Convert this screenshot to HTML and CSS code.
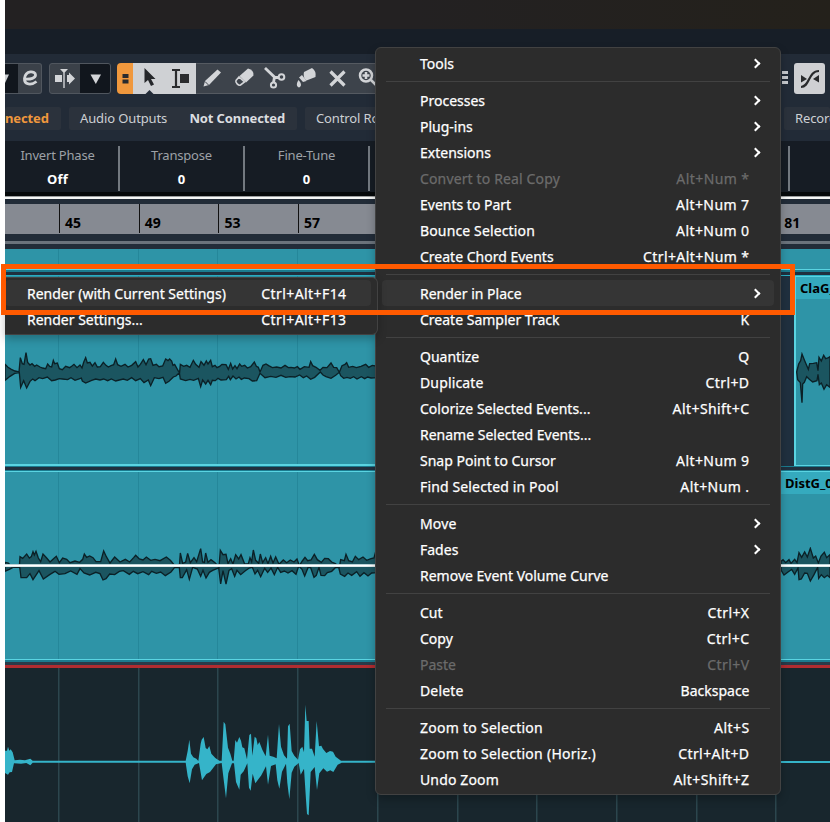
FILE: index.html
```html
<!DOCTYPE html>
<html lang="en">
<head>
<meta charset="utf-8">
<title>Project window</title>
<link rel="stylesheet" href="styles.css">
</head>
<body>
<div class="app">
  <div class="titlebar"></div>
  <div class="menubar"></div>

  <div class="toolbar">
    <div class="group group-edit">
      <span class="dark-cell"><svg width="13" height="29" viewBox="0 0 13 29"><path d="M-5 10.500H4L-.5 20z" fill="#cdd0d3"/></svg></span>
      <span class="cell"><svg width="23" height="29" viewBox="0 0 23 29"><path d="M6.500 15C13 15.500 17.500 14 17.500 11C17.500 6.500 7.500 6 6.500 14.500C6 21 13.500 21.500 18.500 17.500" fill="none" stroke="#d3d5d8" stroke-width="2.800"/></svg></span>
    </div>
    <div class="group group-scroll">
      <span class="cell"><svg width="30" height="29" viewBox="0 0 30 29"><path d="M5 11h7v7H5zM17 11h2V8.500l6 6-6 6V18h-2zM10 5h8l-3.300 3.500V24h-1.400V8.500z" fill="#d3d5d8"/></svg></span>
      <span class="dark-cell"><svg width="30" height="29" viewBox="0 0 30 29"><path d="M10.500 10.500h10.500l-5.200 9.500z" fill="#d3d5d8"/></svg></span>
    </div>
    <div class="tools">
      <span class="tool-orange"><svg width="16" height="31" viewBox="0 0 16 31"><path d="M5.500 11h6v4h-6zM5.500 16.500h6v4h-6z" fill="#282a2e"/></svg></span>
      <span class="tool-light"><svg width="63" height="31" viewBox="0 0 63 31">
        <path d="M11.500 5v15l3.500-3 3 6 3-1.500-3-5.500h4.500z" fill="#25272a"/><path d="M12.500 31l4-4 4 4z" fill="#222b37"/>
        <path d="M39 7h8M43 7v17M39 24h8" stroke="#2b2c2e" stroke-width="2.200"/><path d="M47 11h9v9h-9z" fill="#2b2c2e"/></svg></span>
      <span class="tool-dark"><svg width="184" height="29" viewBox="0 0 184 29">
        <g fill="#d3d5d8">
          <path d="M7.500 22.500l1.500-5.500L21.500 5.500l3.500 3-12 12.500z"/><path d="M9 17.500l3.500 3.500" stroke="#3d434b"/>
          <path d="M43.500 12l8.500-7.500q6 1.500 5.500 7L50 18.500z"/><path d="M43 13l-3 3.500c-1 2 2.500 5.500 4.500 4.500l4-3z" fill="none" stroke="#d3d5d8" stroke-width="1.600"/>
          <path d="M108 8l8-4q4.500 3 3.500 9l-9 3.500q-4-3.500-2.500-8.500zM106 11l4.500 6-3.500 1-4-4.500zM102.500 16c3 3 3.500 6.500.5 7.500-3-1-2.500-4.500-.5-7.500z"/>
        </g>
        <g fill="none" stroke="#d3d5d8" stroke-width="2.500"><path d="M69 4l10 9.500h4M78.500 13l-1 5.500" stroke-width="2.800"/><circle cx="85.500" cy="13" r="2.800" stroke-width="2"/><circle cx="77.500" cy="21" r="2.600" stroke-width="2"/>
          <path d="M134.500 7.500l14 14M148.500 7.500l-14 14" stroke-width="3.200"/>
          <circle cx="170" cy="11.500" r="6"/><path d="M166.500 11.500h7M170 8v7M175 16l8 8"/></g>
      </svg></span>
    </div>
    <div class="toolbar-right">
      <svg width="8" height="31" viewBox="0 0 8 31"><path d="M0 8h6v3H0zM0 13h6v3H0zM0 18h6v3H0z" fill="#c6c9cd"/></svg>
      <span class="snap"><svg width="31" height="31" viewBox="0 0 31 31"><path d="M7 24C16 24 14 8 25 8" fill="none" stroke="#292a2c" stroke-width="2.200"/><path d="M7 12l6 4-6 3.500zM25 12l-6 4 6 3.500z" fill="#292a2c"/></svg></span>
    </div>
  </div>

  <div class="status">
    <div class="pill pill-in"><b class="warn">nected</b></div>
    <div class="pill pill-out"><span>Audio Outputs</span><b>Not Connected</b></div>
    <div class="pill pill-control"><span>Control Room</span></div>
    <div class="pill pill-record"><span>Record</span></div>
  </div>

  <div class="info">
    <div class="field"><span>Invert Phase</span><b>Off</b></div>
    <div class="field"><span>Transpose</span><b>0</b></div>
    <div class="field"><span>Fine-Tune</span><b>0</b></div>
    <div class="field field-rest"></div>
  </div>
  <div class="info-edge"></div>

  <div class="ruler">
    <span>45</span><span>49</span><span>53</span><span>57</span><span></span><span></span><span></span><span></span><span></span><span class="last">81</span>
  </div>
  <div class="range"></div>

  <div class="lane lane-top grid"></div>
  <div class="gap gap-a"></div>
  <div class="lane-row">
    <div class="clip clip-left grid">
      <svg class="wave wave-one" width="375" height="80" viewBox="15 0 1125 240"><path d="M15 88L24 97 34 103 45 108 57 111 61 68 67 86 72 88 78 53 83 82 90 90 96 86 104 94 110 90 120 96 128 99 137 101 143 87 149 94 155 96 160 76 164 86 172 84 178 101 187 104 197 94 209 98 215 94 222 88 231 98 240 90 246 99 251 82 257 68 262 84 270 82 277 93 285 83 292 96 301 95 310 82 318 91 325 96 333 92 341 89 347 72 353 89 363 94 375 88 384 96 395 91 407 80 414 96 421 88 430 74 438 89 446 72 452 71 459 91 469 88 477 95 488 93 497 72 504 77 509 72 515 78 519 91 524 88 535 108 539 111 541 88 551 94 560 91 570 97 580 76 587 88 597 97 603 80 609 87 612 91 619 78 624 87 632 76 637 95 645 91 651 98 659 94 666 88 678 89 685 103 692 85 698 102 705 92 711 101 719 87 725 94 734 91 742 99 752 95 763 81 769 94 775 97 780 111 789 91 798 87 806 92 817 98 830 96 843 99 855 91 865 98 873 97 883 99 892 95 900 103 913 95 927 97 932 80 938 92 948 97 960 106 969 97 981 98 993 84 1001 97 1010 98 1018 112 1026 92 1035 88 1040 83 1046 97 1058 94 1069 98 1083 94 1097 88 1106 97 1117 91 1128 93V128L1113 129 1103 126 1094 131 1084 125 1071 132 1061 125 1051 130 1041 127 1031 130 1022 122 1018 112 1007 121 993 130 978 125 969 120 961 111 944 127 932 133 920 123 910 128 899 120 885 126 870 125 857 127 843 121 828 127 812 124 795 128 780 115 770 137 757 138 747 131 733 129 724 133 717 126 708 132 699 123 691 134 686 124 679 134 663 135 654 130 646 137 637 136 632 149 624 136 617 147 608 135 602 155 595 130 581 136 570 133 557 137 541 132 538 113 528 123 520 126 507 139 497 145 489 127 477 131 463 128 452 152 445 135 432 143 421 131 407 137 395 128 382 136 370 132 358 135 347 138 334 132 323 137 311 132 300 135 287 132 275 136 257 144 247 138 244 129 225 136 213 128 203 134 187 132 178 131 166 135 155 137 142 126 128 131 117 128 105 137 98 132 90 139 80 159 71 137 62 157 58 113 44 115 30 124 15 136z"/></svg>
    </div>
    <div class="clip clip-cla"><div class="clip-name">ClaG_</div>
      <svg class="wave wave-cla" width="34" height="52" viewBox="168 290 102 156"><path d="M170 350L176 326 182 316 186 296 194 316 205 342 209 325 220 324 230 322 234 346 237 306 244 317 251 300 257 310 264 308 270 304V396L260 388 252 402 244 383 238 388 234 357 231 376 218 380 208 372 200 364 193 381 188 386 186 442 181 382 173 373z"/></svg>
    </div>
  </div>
  <div class="gap gap-b"></div>
  <div class="lane lane-bottom grid">
    <div class="clip-name name-dist">DistG_0</div>
    <svg class="wave wave-two" width="375" height="60" viewBox="15 0 1125 180"><path d="M15 67L25 69 35 80 58 82 60 50 68 55 80 42 88 54 94 50 99 35 103 45 108 34 115 54 122 65 129 42 140 54 150 66 163 54 169 49 178 68 188 54 200 58 210 68 225 63 239 67 248 58 253 42 260 52 269 48 279 53 288 65 302 65 311 33 319 50 330 69 344 51 360 66 376 58 389 66 401 53 407 46 418 57 429 60 439 51 452 61 465 58 480 62 499 51 511 61 522 74 538 80 541 39 548 70 557 66 563 40 571 68 582 53 590 65 602 26 608 66 613 67 617 39 624 67 633 59 645 68 657 81 661 31 669 44 678 43 684 71 692 56 699 72 707 44 716 57 723 44 734 72 745 71 750 53 755 65 760 30 767 61 776 70 781 42 788 68 797 53 804 71 812 49 819 69 827 51 837 73 850 60 860 68 871 60 882 66 891 57 898 77 907 63 915 52 923 62 933 60 943 43 952 59 964 67 974 55 985 56 995 66 1006 71 1018 81 1022 59 1033 62 1038 43 1046 62 1057 66 1066 49 1076 59 1089 51 1100 61 1113 56 1122 54 1128 31V98L1115 99 1104 108 1092 98 1080 109 1070 95 1055 106 1044 99 1034 109 1021 102 1016 82 1006 83 995 94 982 98 974 107 963 106 957 82 949 106 942 112 932 83 924 83 914 108 906 88 896 78 888 103 876 92 864 99 853 93 842 97 833 82 823 104 813 84 803 97 794 85 782 110 773 91 765 102 757 82 748 84 736 92 722 104 711 91 704 109 695 86 687 91 678 132 669 92 662 132 656 84 638 91 628 97 618 114 609 91 602 109 592 87 578 82 568 118 560 89 547 113 541 113 538 83 524 82 513 96 496 107 482 96 469 100 455 94 446 104 429 95 413 101 400 94 388 103 370 92 358 94 344 104 329 102 318 116 309 120 300 101 287 97 269 105 252 99 240 86 231 103 212 93 195 101 177 103 165 94 150 103 130 117 117 92 99 119 90 101 80 113 63 113 59 81 39 82 28 88 15 94z"/></svg>
    <svg class="wave wave-dist" width="49" height="36" viewBox="123 82 147 108"><path d="M123 125L129 120 137 129 147 120 153 131 164 119 171 129 177 99 185 113 194 97 202 112 211 86 220 115 227 109 235 130 243 109 253 98 260 114 270 105V174L262 167 253 174 244 165 236 176 233 143 222 165 211 184 202 161 194 160 184 178 177 180 174 145 164 164 155 149 145 156 132 166 123 151z"/></svg>
    <div class="volume"></div>
  </div>
  <div class="gap gap-c"></div>
  <div class="red"></div>
  <div class="record-lane grid">
    <svg width="375" height="115" viewBox="15 160 1125 345"><path d="M15 303L21 303 24 291 28 303 32 299 38 308 44 332 60 330 75 332 91 327 98 333H557L563 304 568 270 573 312 580 323 589 327 595 334 602 282 605 270 611 262 617 295 622 299 628 289 634 312 646 325 658 333H665L671 216 676 224 684 294 691 312 697 333H701L706 271 711 279 718 262 723 273 727 293 733 296 741 329 748 256 753 252 757 318 764 261 769 266 773 286 778 277 787 300 797 320 804 255 809 318 820 321 830 326 837 223 843 291 852 317 861 327 864 230 869 222 875 304 883 318 894 330 900 299 907 291 912 308 916 165 920 214 926 214 929 297 936 297 944 321 950 214 957 290 964 288 969 298 979 310 990 304 999 306 1007 321 1023 333H1140V339H1025L1013 345 1000 367 991 362 981 366 970 356 958 371 951 421 944 352 932 367 926 497 921 493 918 450 912 357 902 375 896 340 883 351 875 369 868 449 862 400 858 342 846 366 838 417 832 392 827 344 813 349 804 405 798 350 784 377 766 401 758 372 752 423 747 414 742 341 731 365 722 375 718 420 708 397 702 341H696L685 371 678 446 671 390 665 340 648 344 630 367 619 373 606 392 597 340 584 345 576 359 569 401 563 380 557 339H98L91 347 79 340 63 342 42 341 36 367 29 368 24 375 15 370z"/></svg>
  </div>

  <nav class="menu main-menu">
    <div class="item"><span>Tools</span><i class="chev"></i></div>
    <hr>
    <div class="item"><span>Processes</span><i class="chev"></i></div>
    <div class="item"><span>Plug-ins</span><i class="chev"></i></div>
    <div class="item"><span>Extensions</span><i class="chev"></i></div>
    <div class="item off"><span class="loose">Convert to Real Copy</span><kbd>Alt+Num *</kbd></div>
    <div class="item"><span>Events to Part</span><kbd>Alt+Num 7</kbd></div>
    <div class="item"><span class="loose">Bounce Selection</span><kbd>Alt+Num 0</kbd></div>
    <div class="item"><span>Create Chord Events</span><kbd>Ctrl+Alt+Num *</kbd></div>
    <hr>
    <div class="item active"><span>Render in Place</span><i class="chev"></i></div>
    <div class="item"><span>Create Sampler Track</span><kbd>K</kbd></div>
    <hr>
    <div class="item"><span>Quantize</span><kbd>Q</kbd></div>
    <div class="item"><span class="loose">Duplicate</span><kbd>Ctrl+D</kbd></div>
    <div class="item"><span>Colorize Selected Events...</span><kbd>Alt+Shift+C</kbd></div>
    <div class="item"><span>Rename Selected Events...</span></div>
    <div class="item"><span>Snap Point to Cursor</span><kbd>Alt+Num 9</kbd></div>
    <div class="item"><span class="loose">Find Selected in Pool</span><kbd>Alt+Num .</kbd></div>
    <hr>
    <div class="item"><span class="loose">Move</span><i class="chev"></i></div>
    <div class="item"><span>Fades</span><i class="chev"></i></div>
    <div class="item"><span>Remove Event Volume Curve</span></div>
    <hr>
    <div class="item"><span>Cut</span><kbd>Ctrl+X</kbd></div>
    <div class="item"><span>Copy</span><kbd>Ctrl+C</kbd></div>
    <div class="item off"><span>Paste</span><kbd>Ctrl+V</kbd></div>
    <div class="item"><span class="loose">Delete</span><kbd class="word">Backspace</kbd></div>
    <hr>
    <div class="item"><span class="looser">Zoom to Selection</span><kbd>Alt+S</kbd></div>
    <div class="item"><span class="looser">Zoom to Selection (Horiz.)</span><kbd>Ctrl+Alt+D</kbd></div>
    <div class="item"><span class="loose">Undo Zoom</span><kbd>Alt+Shift+Z</kbd></div>
  </nav>
  <nav class="menu sub-menu">
    <div class="item active"><span>Render (with Current Settings)</span><kbd>Ctrl+Alt+F14</kbd></div>
    <div class="item"><span>Render Settings...</span><kbd>Ctrl+Alt+F13</kbd></div>
  </nav>
  <div class="callout"></div>
</div>
</body>
</html>
```
FILE: styles.css
```css
* { box-sizing: border-box; }
body { margin: 0; background: #fff; font-family: "Noto Sans", "Open Sans", sans-serif; overflow: hidden; }
.app { position: relative; width: 830px; height: 822px; padding-left: 5px; overflow: hidden; }
svg { display: block; }

.titlebar { height: 29px; background: linear-gradient(90deg, #232122 50%, #24211b); }
.menubar { height: 25px; background: #171e27; }

.toolbar { height: 49px; padding-top: 9px; background: #222b37; display: flex; }
.group { display: flex; height: 31px; border: 1px solid #50565e; border-radius: 3px; overflow: hidden; background: #3b4149; }
.group-edit { width: 37px; border-left: 0; border-radius: 0 3px 3px 0; }
.group-scroll { width: 62px; margin-left: 7px; }
.dark-cell { background: #11161d; }
.tools { display: flex; width: 263px; height: 31px; margin-left: 6px; }
.tool-orange { width: 16px; background: #f0983d; border-radius: 4px 0 0 4px; }
.tool-light { width: 63px; background: #cfd1d4; }
.tool-dark { width: 184px; background: #3d434b; border: solid #555a61; border-width: 1px 0; }
.toolbar-right { display: flex; margin-left: auto; width: 48px; }
.toolbar-right > svg { margin-right: 4px; }
.snap { width: 31px; height: 31px; background: #cfd0d3; border-radius: 3px; }

.status { height: 38px; padding-top: 4px; background: #222b37; display: flex; gap: 8px; font-size: 13px; letter-spacing: -.12px; color: #cdd0d4; }
.pill { height: 23px; line-height: 23px; background: #2b323c; border-radius: 2px; white-space: nowrap; overflow: hidden; }
.pill b { color: #dcdee0; }
.pill .warn { color: #f0983d; }
.pill-in { width: 56px; }
.pill-out { width: 228px; padding: 0 12px 0 11px; display: flex; justify-content: space-between; }
.pill-control { width: 100px; padding-left: 11px; }
.pill-record { width: 46px; margin-left: auto; padding-left: 11px; }

.info { height: 51px; background: #161c24; display: flex; padding-top: 5px; }
.field { width: 125px; height: 45px; border-right: 2px solid #737980; display: flex; flex-direction: column; align-items: center; font-size: 13px; line-height: 18px; letter-spacing: -.2px; color: #9da1a7; }
.field:first-child { width: 115px; padding-right: 8px; }
.field b { color: #fff; margin-top: 6px; letter-spacing: .3px; }
.field-rest { width: 420px; }
.info-edge { height: 12px; background: linear-gradient(#05080a 0 4px, #9d9fa0 4px 5px, #f5f6f6 5px 7px, #222c38 7px); }

.ruler { height: 30px; display: flex; padding-left: 54px; background: #868a92; font-size: 14px; font-weight: 700; color: #000; line-height: 19px; }
.ruler span { width: 79.700px; flex: none; height: 29px; padding: 9px 0 0 5px; border-left: 1px solid #111; }
.ruler .last { border-left: 0; padding-left: 8px; width: 50px; }
.range { height: 15px; background: linear-gradient(#222c38 0 7px, #6b737c 7px 10px, #222c38 10px); }

.grid { --line: #25879a; background-image: repeating-linear-gradient(90deg, var(--line) 0 1px, transparent 1px 79.700px); background-position: 53px 0; background-repeat: no-repeat; }
.lane { background-color: #2e94a7; }
.lane-top { height: 20px; }
.gap { background: #20303f; }
.gap-a { height: 7px; background: linear-gradient(#5ad4e2 0 1px, #1b7b8f 1px 3px, #20303f 3px 6px, #2ab0c4 6px); }
.lane-row { height: 190px; display: flex; justify-content: space-between; background: #20303f; }
.clip { background-color: #2e94a7; }
.clip-left { width: 375px; border-bottom: 2px solid #5ad4e2; }
.clip-cla { width: 36px; border: solid #5ad4e2; border-width: 1px 0 1px 2px; }
.clip-name { height: 22px; padding-left: 4px; background: #35aabe; color: #000; font-size: 13px; line-height: 22px; font-weight: 700; white-space: nowrap; overflow: hidden; }
.wave path { fill: #1b5560; stroke: #0b2026; stroke-width: 4; }
.wave-one { margin-top: 59px; }
.wave-cla { margin-top: 53px; }
.gap-b { height: 5px; background: linear-gradient(#1b7b8f 0 1px, #20303f 1px 4px, #1b7b8f 4px); }
.lane-bottom { height: 189px; position: relative; border: solid #5ad4e2; border-width: 1px 0; }
.name-dist { width: 50px; margin-left: auto; padding-left: 5px; }
.wave-two { margin-top: 46px; }
.wave-dist { position: absolute; right: 0; top: 75px; }
.volume { position: absolute; left: 0; right: 0; top: 92px; height: 3px; background: linear-gradient(#b9d3d8 0 1px, #fff 1px 2px, #dfe9eb 2px); }
.gap-c { height: 5px; background: linear-gradient(#1b7b8f 0 2px, #2b3a49 2px); }
.red { height: 3px; background: #b02c30; }
.record-lane { height: 154px; background-color: #18262d; background-image: repeating-linear-gradient(90deg, #2c464e 0 1px, #21363d 1px 2px, transparent 2px 79.700px); padding-top: 35px; position: relative; }
.record-lane::after { content: ""; position: absolute; left: 370px; right: 0; top: 93px; height: 2px; background: #35b4c9; }
.record-lane path { fill: #35b4c9; }

.menu { position: absolute; background: #2c2c2c; border: 1px solid #424242; border-radius: 6px; color: #fff; font-size: 14px; -webkit-text-stroke: .25px currentColor; box-shadow: 0 4px 8px rgba(0, 0, 0, .25); }
.main-menu { left: 375px; top: 47px; width: 406px; height: 748px; padding: 2px 6px; }
.sub-menu { left: 5px; top: 277px; width: 373px; height: 58px; padding: 2px 6px 2px 0; border-left: 0; border-radius: 0 6px 6px 0; }
.item { height: 26px; display: flex; align-items: center; justify-content: space-between; padding: 0 25px 0 38px; border-radius: 4px; white-space: nowrap; }
.sub-menu .item { padding-left: 22px; }
.item.active { background: #353535; }
.item.off { color: #6b6b6b; }
.loose { letter-spacing: .14px; }
.looser { letter-spacing: .27px; }
kbd { font: inherit; letter-spacing: .42px; margin-right: -.5px; }
kbd.word { letter-spacing: 0; }
.menu hr { height: 1px; margin: 5px 4px; border: 0; background: #424242; }
.chev { width: 7px; height: 7px; border: solid #fff; border-width: 2px 2px 0 0; transform: rotate(45deg); margin-right: -10px; }
.callout { position: absolute; left: 1px; top: 264px; width: 794px; height: 51px; border: 5px solid #ff5a00; }
```
